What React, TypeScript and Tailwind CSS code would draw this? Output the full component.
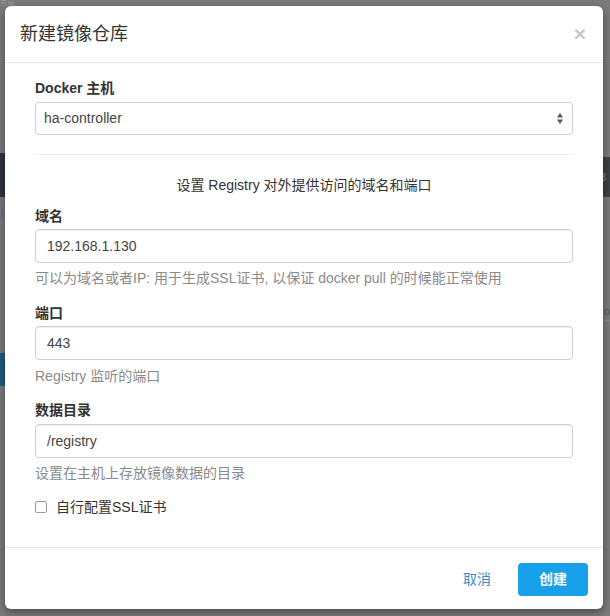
import React from "react";

const font = { fontFamily: '"Liberation Sans", "Noto Sans CJK SC", sans-serif' };

function Label({ children, className = "" }: { children: React.ReactNode; className?: string }) {
  return <div className={`text-[14px] leading-[20px] font-bold text-[#333] ${className}`}>{children}</div>;
}

function Input({ value, className = "" }: { value: string; className?: string }) {
  return (
    <div
      className={`h-[34px] w-full rounded-[4px] border border-[#cfcfcf] bg-white pl-[11px] flex items-center text-[14px] text-[#444] shadow-[inset_0_1px_1px_rgba(0,0,0,0.06)] ${className}`}
    >
      {value}
    </div>
  );
}

function Help({ children, className = "" }: { children: React.ReactNode; className?: string }) {
  return <div className={`text-[14px] leading-[20px] text-[#8a8a8a] ${className}`}>{children}</div>;
}

export default function App() {
  return (
    <div className="relative h-[616px] w-[610px] overflow-hidden bg-[#7a7a7a]" style={font}>
      {/* backdrop hints */}
      <div className="absolute left-0 top-0 text-[8px] leading-[8px] text-[#9a9a9a]">ちtk</div>
      <div className="absolute left-0 top-[153px] h-[44px] w-[10px] bg-[#2e3240]" />
      <div className="absolute left-0 top-[206px] text-[11px] text-[#5a66a0]">P</div>
      <div className="absolute left-0 top-[353px] h-[33px] w-[10px] bg-[#1f5b7a]" />
      <div className="absolute right-0 top-[157px] h-[40px] w-[10px] bg-[#3f4043] text-[11px] text-[#888] flex items-center">8</div>
      <div className="absolute right-0 top-[303px] text-[11px] text-[#555]">o</div>
      <div className="absolute right-0 top-[320px] h-px w-[8px] bg-[#8a8a8a]" />

      {/* modal */}
      <div className="absolute left-[5px] top-[6px] w-[598px] h-[603px] rounded-[6px] bg-white shadow-[0_3px_9px_rgba(0,0,0,0.4)] flex flex-col">
        <div className="h-[57px] border-b border-[#e5e5e5] flex items-start justify-between pl-[15px] pr-[17px] pt-[15px]">
          <div className="text-[18px] leading-[26px] text-[#333]">新建镜像仓库</div>
          <div className="text-[21px] leading-[26px] font-bold text-[#c8c8c8]">×</div>
        </div>

        <div className="px-[30px] pt-[15px] flex flex-col">
          <Label>Docker 主机</Label>
          <div className="mt-[4px] h-[33px] w-full rounded-[4px] border border-[#cfcfcf] bg-white pl-[8px] pr-[8px] flex items-center justify-between text-[14px] text-[#444]">
            <span>ha-controller</span>
            <svg width="8" height="13" viewBox="0 0 8 13">
              <path d="M4 1 L7 5.5 H1 Z" fill="#555" />
              <path d="M4 12 L7 7.5 H1 Z" fill="#555" />
            </svg>
          </div>
          <div className="mt-[19px] h-px w-full bg-[#eeeeee]" />
          <div className="mt-[20px] text-center text-[14px] leading-[20px] text-[#333]">
            设置 Registry 对外提供访问的域名和端口
          </div>

          <Label className="mt-[11px]">域名</Label>
          <Input value="192.168.1.130" className="mt-[3px]" />
          <Help className="mt-[5px]">可以为域名或者IP: 用于生成SSL证书, 以保证 docker pull 的时候能正常使用</Help>

          <Label className="mt-[15px]">端口</Label>
          <Input value="443" className="mt-[3px] h-[33px]" />
          <Help className="mt-[6px]">Registry 监听的端口</Help>

          <Label className="mt-[14px]">数据目录</Label>
          <Input value="/registry" className="mt-[4px]" />
          <Help className="mt-[5px]">设置在主机上存放镜像数据的目录</Help>

          <div className="mt-[14px] flex items-center h-[20px] text-[14px] text-[#333]">
            <span className="inline-block h-[12px] w-[12px] rounded-[2px] border border-[#9a9a9a] bg-white" />
            <span className="ml-[9px]">自行配置SSL证书</span>
          </div>
        </div>

        <div className="mt-[30px] border-t border-[#e5e5e5] flex items-center justify-end pt-[15px] pr-[15px]">
          <span className="text-[14px] text-[#3d8bc6] mr-[27px]">取消</span>
          <div className="h-[33px] w-[70px] rounded-[4px] bg-[#18a0ea] text-white text-[14px] font-bold flex items-center justify-center">
            创建
          </div>
        </div>
      </div>
    </div>
  );
}
